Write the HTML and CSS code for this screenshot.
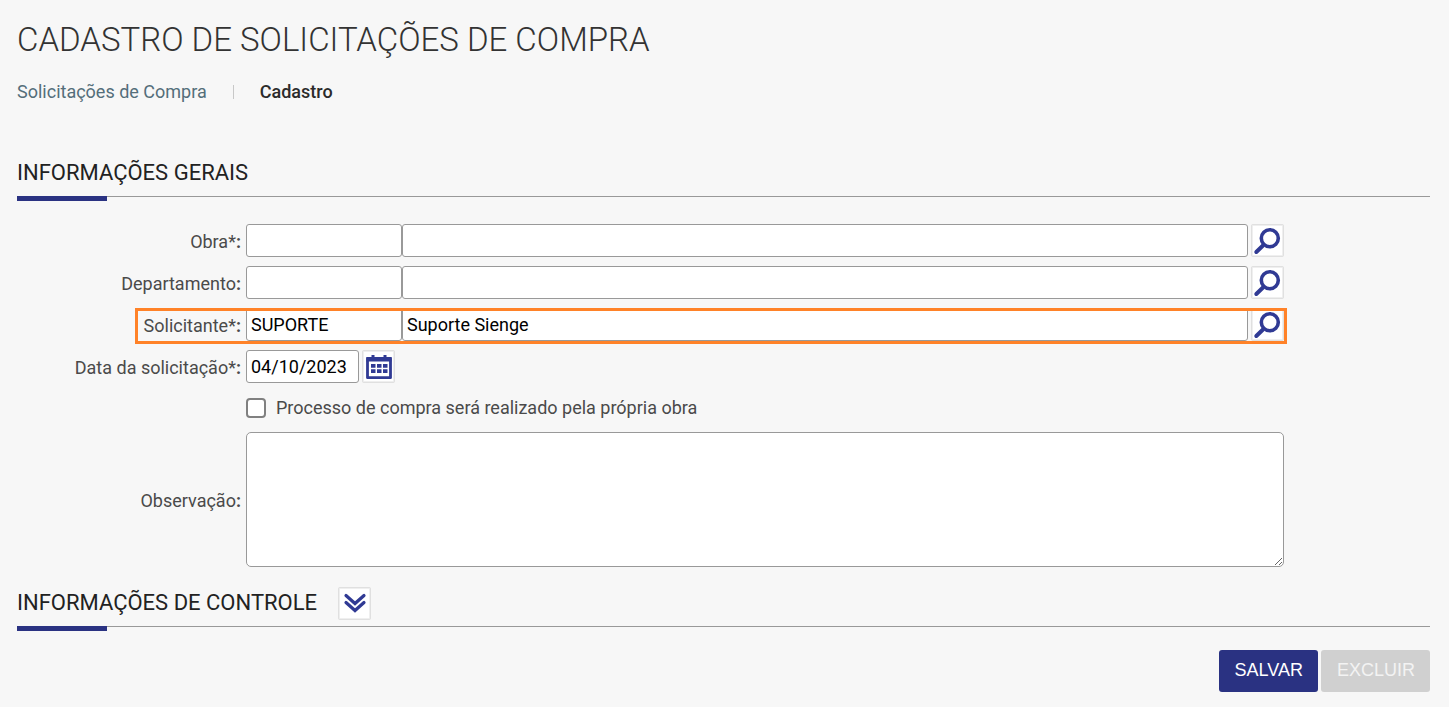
FILE: index.html
```
<!DOCTYPE html>
<html lang="pt-BR">
<head>
  <meta charset="UTF-8">
  <meta name="viewport" content="width=device-width, initial-scale=1.0">
  <title>Cadastro de Solicitações de Compra</title>
  <link rel="stylesheet" href="styles.css">
</head>
<body>

  <svg class="sprite" aria-hidden="true">
    <symbol id="icon-search" viewBox="0 0 33 33">
      <path d="M12 21.500 5.300 28" fill="none" stroke="currentColor" stroke-width="4" stroke-linecap="round"/>
      <circle cx="18.800" cy="14.200" r="8.500" fill="none" stroke="currentColor" stroke-width="3.600"/>
    </symbol>
    <symbol id="icon-calendar" viewBox="0 0 33 33">
      <path d="M5.500 8.500h23v19.200h-23z" fill="none" stroke="currentColor" stroke-width="2.800" stroke-linejoin="round"/>
      <path d="M4.500 7h25v4.500h-25zM9.500 5h3v4h-3zM21.500 5h3v4h-3z" fill="currentColor"/>
      <path d="M9 14h4.500v3.800H9zM15 14h4.500v3.800h-4.500zM21 14h4.500v3.800h-4.500zM9 19.200h4.500v3.800H9zM15 19.200h4.500v3.800h-4.500zM21 19.200h4.500v3.800h-4.500z" fill="currentColor"/>
    </symbol>
    <symbol id="icon-expand" viewBox="0 0 33 33">
      <path d="M8 8.500l9 8 9-8M8 15.500l9 8 9-8" fill="none" stroke="currentColor" stroke-width="3.200" stroke-linecap="round"/>
    </symbol>
  </svg>

  <h1>CADASTRO DE SOLICITAÇÕES DE COMPRA</h1>

  <nav class="breadcrumb">
    <a href="#">Solicitações de Compra</a>
    <span class="divider"></span>
    <span class="current">Cadastro</span>
  </nav>

  <form>
    <h2>INFORMAÇÕES GERAIS</h2>

    <div class="fields">
      <div class="row">
        <label for="obra">Obra*<b>:</b></label>
        <div class="control">
          <input type="text" id="obra" class="code">
          <input type="text" class="name" aria-label="Nome da obra">
          <button type="button" class="icon-btn" aria-label="Pesquisar obra"><svg><use href="#icon-search"/></svg></button>
        </div>
      </div>

      <div class="row">
        <label for="departamento">Departamento<b>:</b></label>
        <div class="control">
          <input type="text" id="departamento" class="code">
          <input type="text" class="name" aria-label="Nome do departamento">
          <button type="button" class="icon-btn" aria-label="Pesquisar departamento"><svg><use href="#icon-search"/></svg></button>
        </div>
      </div>

      <div class="row highlight">
        <label for="solicitante">Solicitante*<b>:</b></label>
        <div class="control">
          <input type="text" id="solicitante" class="code" value="SUPORTE">
          <input type="text" class="name" aria-label="Nome do solicitante" value="Suporte Sienge">
          <button type="button" class="icon-btn" aria-label="Pesquisar solicitante"><svg><use href="#icon-search"/></svg></button>
        </div>
      </div>

      <div class="row">
        <label for="data">Data da solicitação*<b>:</b></label>
        <div class="control">
          <input type="text" id="data" class="date" value="04/10/2023">
          <button type="button" class="icon-btn" aria-label="Abrir calendário"><svg><use href="#icon-calendar"/></svg></button>
        </div>
      </div>

      <div class="row check-row">
        <div class="control">
          <input type="checkbox" id="processo">
          <label for="processo">Processo de compra será realizado pela própria obra</label>
        </div>
      </div>

      <div class="row">
        <label for="observacao">Observação<b>:</b></label>
        <div class="control">
          <textarea id="observacao"></textarea>
        </div>
      </div>
    </div>

    <h2>
      INFORMAÇÕES DE CONTROLE
      <button type="button" class="icon-btn" aria-label="Expandir"><svg><use href="#icon-expand"/></svg></button>
    </h2>

    <div class="actions">
      <button type="submit" class="save">SALVAR</button>
      <button type="button" class="delete" disabled>EXCLUIR</button>
    </div>
  </form>

</body>
</html>
```
FILE: styles.css
```
* {
  box-sizing: border-box;
}

body {
  margin: 0;
  padding: 20px 19px 15px 17px;
  background-color: #f7f7f7;
  color: #4a4a4a;
  font-family: Roboto, sans-serif;
  font-size: 18px;
  line-height: 24px;
}

.sprite {
  display: none;
}

h1 {
  margin: 0;
  color: #333;
  font-size: 33px;
  font-weight: 300;
  line-height: 40px;
}

.breadcrumb {
  display: flex;
  align-items: center;
  gap: 26px;
  margin: 20px 0 46px;
}

.breadcrumb a {
  color: #546e7a;
  text-decoration: none;
}

.breadcrumb .divider {
  width: 1px;
  height: 14px;
  background-color: #c8c8c8;
}

.breadcrumb .current {
  color: #2b2b2b;
  font-weight: 500;
}

h2 {
  position: relative;
  display: flex;
  align-items: center;
  gap: 21px;
  height: 47px;
  margin: 0;
  border-bottom: 1px solid #999;
  color: #222;
  font-size: 22px;
  font-weight: 400;
}

h2::after {
  content: "";
  position: absolute;
  left: 0;
  top: 100%;
  width: 90px;
  height: 5px;
  background-color: #2a3282;
}

.fields {
  display: flex;
  flex-direction: column;
  gap: 9px;
  margin: 27px 146px 13px 0;
}

.row {
  display: grid;
  grid-template-columns: 225px 1fr;
  column-gap: 4px;
  align-items: center;
}

.row > label {
  padding: 2px 1px 0 0;
  text-align: right;
}

.control {
  display: flex;
  align-items: center;
}

input[type="text"],
textarea {
  height: 33px;
  padding: 0 4px;
  border: 1px solid #999;
  border-radius: 3px;
  background-color: #fff;
  color: #000;
  font-family: inherit;
  font-size: 18px;
  outline: none;
}

input.code {
  width: 156px;
}

input.name {
  flex: 1;
  min-width: 0;
}

input.date {
  width: 113px;
}

textarea {
  width: 100%;
  height: 135px;
  border-radius: 5px;
  resize: both;
}

.icon-btn {
  width: 33px;
  height: 33px;
  padding: 0;
  border: 0;
  border-radius: 2px;
  background-color: #fff;
  box-shadow: inset 0 0 0 1px #e0e0e0, inset 0 0 0 2px #efefef;
  color: #303a94;
  cursor: pointer;
}

.icon-btn svg {
  display: block;
  width: 33px;
  height: 33px;
}

.control .icon-btn {
  margin-left: 3px;
}

.highlight {
  position: relative;
}

.highlight::after {
  content: "";
  position: absolute;
  top: 0;
  right: -3px;
  bottom: -3px;
  left: 118px;
  border: 3px solid #ff8228;
  pointer-events: none;
}

.check-row .control {
  grid-column: 2;
  height: 31px;
}

input[type="checkbox"] {
  appearance: none;
  width: 20px;
  height: 20px;
  margin: 0 10px 0 0;
  border: 2px solid #808080;
  border-radius: 4px;
  background-color: #fff;
}

input[type="checkbox"]:checked {
  background-color: #2a3282;
}

.actions {
  display: flex;
  justify-content: flex-end;
  gap: 3px;
  margin-top: 23px;
}

.actions button {
  height: 42px;
  padding: 0 15px 2px 16px;
  border: 0;
  border-radius: 3px;
  font-family: "Liberation Sans", Arial, sans-serif;
  font-size: 18px;
}

.save {
  background-color: #2a3282;
  color: #fff;
  cursor: pointer;
}

.delete {
  background-color: #d0d0d0;
  color: #f3f3f3;
}
```
